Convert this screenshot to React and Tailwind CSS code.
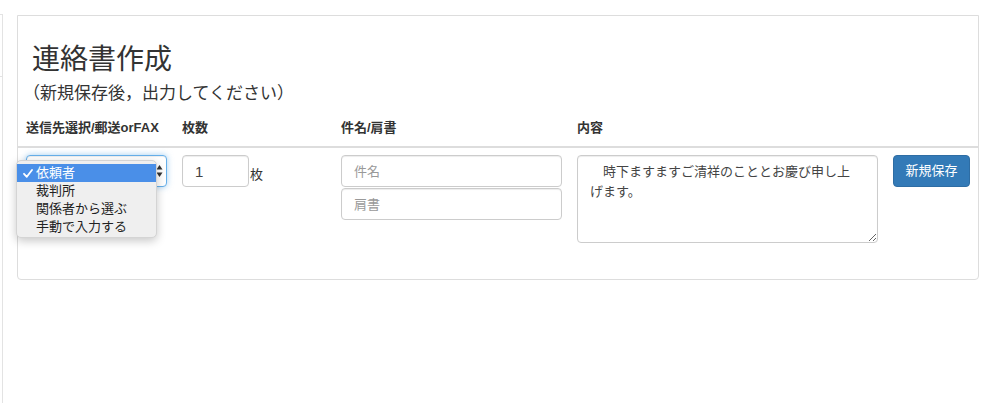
import { useState } from "react";

const font = { fontFamily: '"Liberation Sans", "Noto Sans CJK JP", sans-serif' };

const options = ["依頼者", "裁判所", "関係者から選ぶ", "手動で入力する"];

function SelectMenu() {
  return (
    <div className="relative w-[141px] h-[32px]">
      {/* the select itself, focused */}
      <div className="w-full h-full rounded-[4px] border border-[#66afe9] bg-white shadow-[inset_0_1px_1px_rgba(0,0,0,0.075),0_0_6px_rgba(102,175,233,0.6)] flex items-center justify-end pr-[3px]">
        <svg width="7" height="14" viewBox="0 0 7 14">
          <path d="M3.5 1 L6.5 5.5 L0.5 5.5 Z" fill="#333" />
          <path d="M3.5 13 L6.5 8.5 L0.5 8.5 Z" fill="#333" />
        </svg>
      </div>

      {/* native popup */}
      <div className="absolute left-[-10px] top-[5px] w-[141px] h-[78px] py-[3px] rounded-[5px] bg-[#efefef] border border-[#d4d4d4] shadow-[0_3px_10px_rgba(0,0,0,0.22)] z-10">
        {options.map((o, i) => (
          <div
            key={o}
            className={
              "h-[18px] leading-[18px] text-[13px] flex items-center " +
              (i === 0 ? "bg-[#4a8fe8] text-white" : "text-[#222]")
            }
          >
            <span className="w-[19px] flex justify-center pl-[2px]">
              {i === 0 && (
                <svg width="10" height="9" viewBox="0 0 10 9">
                  <path d="M1 4.8 L3.8 7.8 L9 1" fill="none" stroke="white" strokeWidth="1.8" strokeLinecap="round" strokeLinejoin="round" />
                </svg>
              )}
            </span>
            <span>{o}</span>
          </div>
        ))}
      </div>
    </div>
  );
}

export default function App() {
  const [count, setCount] = useState("1");
  const [subject, setSubject] = useState("");
  const [title, setTitle] = useState("");

  const inputCls =
    "h-[32px] rounded-[4px] border border-[#ccc] bg-white px-[12px] text-[13px] text-[#555] placeholder:text-[#999] shadow-[inset_0_1px_1px_rgba(0,0,0,0.075)] outline-none";

  return (
    <div className="flex min-h-[403px] bg-white text-[#333]" style={font}>
      {/* cut-off sidebar */}
      <div className="w-[3px] mt-[14px] border-r border-[#e3e3e3]">
        <div className="h-[63px] border-t border-b border-[#e3e3e3]" />
      </div>

      <div className="flex-1 pl-[14px] pr-[21px] pt-[15px]">
        <div className="border border-[#dddddd] rounded-b-[4px] pb-[36px]">
          <h2 className="mt-[28px] pl-[14px] text-[28px] leading-[31px] font-normal">連絡書作成</h2>
          <div className="mt-[7px] pl-[5px] text-[17px] leading-[24px]">（新規保存後，出力してください）</div>

          {/* header row */}
          <div className="mt-[4px] flex border-b-2 border-[#dddddd] text-[13px] font-bold leading-[20px]">
            <div className="w-[156px] px-2 py-2">送信先選択/郵送orFAX</div>
            <div className="w-[159px] px-2 py-2">枚数</div>
            <div className="w-[236px] px-2 py-2">件名/肩書</div>
            <div className="w-[316px] px-2 py-2">内容</div>
            <div className="flex-1 px-2 py-2"></div>
          </div>

          {/* body row */}
          <div className="flex items-start pt-[7px] text-[13px]">
            <div className="w-[156px] px-2">
              <SelectMenu />
            </div>
            <div className="w-[159px] px-2 flex items-end">
              <input
                className={inputCls + " w-[67px] !text-[15px] !text-[#444]"}
                value={count}
                onChange={(e) => setCount(e.target.value)}
              />
              <span className="leading-[16px] pb-[4px] pl-[1px]">枚</span>
            </div>
            <div className="w-[236px] px-2 flex flex-col gap-[1px]">
              <input
                className={inputCls + " w-[221px]"}
                placeholder="件名"
                value={subject}
                onChange={(e) => setSubject(e.target.value)}
              />
              <input
                className={inputCls + " w-[221px]"}
                placeholder="肩書"
                value={title}
                onChange={(e) => setTitle(e.target.value)}
              />
            </div>
            <div className="w-[316px] px-2">
              <textarea
                className="block w-[301px] h-[88px] rounded-[4px] border border-[#ccc] bg-white pl-[12px] pr-[22px] py-[6px] text-[13px] leading-[20px] text-[#444] shadow-[inset_0_1px_1px_rgba(0,0,0,0.075)] outline-none"
                defaultValue="　時下ますますご清祥のこととお慶び申し上げます。"
              />
            </div>
            <div className="flex-1 px-2">
              <button className="h-[32px] w-[77px] rounded-[4px] border border-[#2e6da4] bg-[#337ab7] text-white text-[13px]">
                新規保存
              </button>
            </div>
          </div>
        </div>
      </div>
    </div>
  );
}
